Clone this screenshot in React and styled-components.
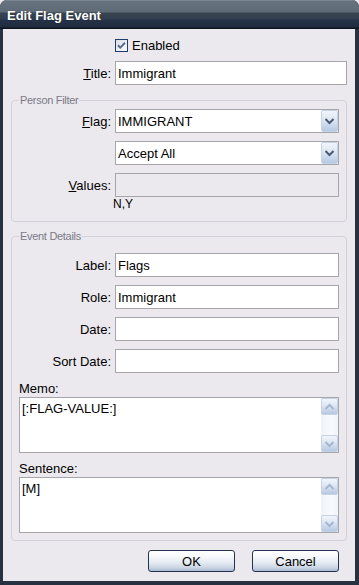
import React from 'react';
import styled, { createGlobalStyle } from 'styled-components';

const FONT = `"Liberation Sans", Arial, sans-serif`;

const Global = createGlobalStyle`
  html, body { margin: 0; padding: 0; background: #EBE9ED; }
  body { font-family: ${FONT}; font-size: 13px; color: #000; }
  * { box-sizing: border-box; }
`;

const Window = styled.div`
  width: 359px;
  height: 585px;
  display: flex;
  flex-direction: column;
  background: #27313F;
  border-radius: 7px 7px 0 0;
  overflow: hidden;
`;

const TitleBar = styled.div`
  height: 29px;
  flex: none;
  display: flex;
  align-items: center;
  padding: 1px 0 0 7px;
  background: linear-gradient(
    to bottom,
    #8E98A3 0px, #67737F 1px, #5E6A76 12px,
    #38444F 13px, #323E4F 19px,
    #253247 20px, #1F2C40 27px,
    #0E141E 28px, #0E141E 29px
  );
`;

const TitleText = styled.span`
  color: #fff;
  font: bold 13px ${FONT};
  letter-spacing: 0;
  text-shadow: 0 0 1px rgba(0, 0, 0, 0.4);
`;

const Client = styled.div`
  flex: 1;
  margin: 0 4px 4px 3px;
  background: #EBE9ED;
  padding: 10px 8px 9px 8px;
  display: flex;
  flex-direction: column;
`;

const Row = styled.div`
  display: grid;
  grid-template-columns: ${p => p.$labelW}px 1fr;
  column-gap: 4px;
  align-items: center;
  margin-top: ${p => p.$mt || 0}px;
`;

const Label = styled.label`
  text-align: right;
  font-size: 13px;
  line-height: 15px;
  white-space: nowrap;
  u { text-decoration: underline; text-underline-offset: 1px; }
`;

const TextBox = styled.input`
  height: 24px;
  width: 100%;
  margin: 0;
  border: 1px solid #A6A5AC;
  background: ${p => (p.$disabled ? '#EBE9ED' : '#fff')};
  padding: 0 2px;
  font: 13px ${FONT};
  color: #000;
  outline: none;
`;

const CheckLine = styled.div`
  display: flex;
  align-items: center;
  gap: 4px;
  height: 13px;
  font-size: 13px;
`;

const Group = styled.fieldset`
  margin: ${p => p.$mt}px 0 0 0;
  padding: 0 7px ${p => p.$pb}px 7px;
  border: 1px solid #D2D0D9;
  border-radius: 4px;
  min-width: 0;
`;

const Legend = styled.legend`
  padding: 0 1px;
  margin: 0;
  color: #7A7987;
  font: 11px ${FONT};
  letter-spacing: -0.3px;
  line-height: 14px;
`;

const GroupBody = styled.div`
  display: flex;
  flex-direction: column;
  gap: 8px;
  padding-top: ${p => p.$pt}px;
`;

const Hint = styled.div`
  font-size: 12px;
  line-height: 13px;
  margin-top: -7px;
  padding-left: 94px;
`;

const ComboBox = styled.div`
  height: 24px;
  border: 1px solid #A6A5AC;
  background: #fff;
  display: flex;
  align-items: center;
  padding-left: 2px;
`;

const ComboText = styled.span`
  flex: 1;
  font-size: 13px;
  line-height: 15px;
`;

const ArrowButton = styled.div`
  width: 17px;
  height: ${p => p.$h}px;
  flex: none;
  border: 1px solid #C6D2E5;
  border-radius: 2px;
  background: linear-gradient(to bottom, #F1F5FC 0%, #DCE6F4 45%, #C7D6EB 75%, #B6C8E2 100%);
  display: flex;
  align-items: center;
  justify-content: center;
`;

const StackedLabel = styled.div`
  font-size: 13px;
  line-height: 15px;
  margin-bottom: -7px;
`;

const MemoBox = styled.div`
  height: 56px;
  border: 1px solid #A6A5AC;
  background: #fff;
  display: flex;
`;

const MemoText = styled.div`
  flex: 1;
  padding: 3px 2px;
  font-size: 13px;
  line-height: 15px;
`;

const ScrollBar = styled.div`
  width: 17px;
  flex: none;
  display: flex;
  flex-direction: column;
  justify-content: space-between;
  background: linear-gradient(to right, #EEF2F9, #F8FAFD 60%, #F1F4FA);
`;

const ButtonRow = styled.div`
  display: flex;
  justify-content: flex-end;
  gap: 17px;
  padding-right: 8px;
  margin-top: 9px;
`;

const PushButton = styled.button`
  width: 87px;
  height: 22px;
  margin: 0;
  padding: 0;
  border: 1px solid #24344F;
  border-radius: 3px;
  background: linear-gradient(to bottom, #FFFFFF 0%, #F5F7FA 30%, #E4E9F1 60%, #C8D3E3 85%, #A9B9D0 100%);
  font: 13px ${FONT};
  color: #000;
`;

const Chevron = ({ dir = 'down', color }) => (
  <svg width="11" height="8" viewBox="0 0 11 8">
    <path
      d={dir === 'down' ? 'M1.5 2 L5.5 6 L9.5 2' : 'M1.5 6 L5.5 2 L9.5 6'}
      fill="none"
      stroke={color}
      strokeWidth="2"
    />
  </svg>
);

const CheckBox = () => (
  <svg width="13" height="13" viewBox="0 0 13 13">
    <defs>
      <linearGradient id="cbg" x1="0" y1="0" x2="1" y2="1">
        <stop offset="0" stopColor="#D9DEE6" />
        <stop offset="1" stopColor="#FBFCFD" />
      </linearGradient>
    </defs>
    <rect x="0.5" y="0.5" width="12" height="12" fill="url(#cbg)" stroke="#1F3E6B" />
    <path d="M3 6.2 L5.3 8.6 L10 3.8" fill="none" stroke="#5B6D8A" strokeWidth="2" />
  </svg>
);

const Combo = ({ value }) => (
  <ComboBox>
    <ComboText>{value}</ComboText>
    <ArrowButton $h={22}>
      <Chevron color="#4B5A74" />
    </ArrowButton>
  </ComboBox>
);

const Memo = ({ value }) => (
  <MemoBox>
    <MemoText>{value}</MemoText>
    <ScrollBar>
      <ArrowButton $h={17}>
        <Chevron dir="up" color="#A7B6CC" />
      </ArrowButton>
      <ArrowButton $h={17}>
        <Chevron color="#A7B6CC" />
      </ArrowButton>
    </ScrollBar>
  </MemoBox>
);

const OUT = 100;
const IN = 92;

export default function App() {
  return (
    <>
      <Global />
      <Window>
        <TitleBar>
          <TitleText>Edit Flag Event</TitleText>
        </TitleBar>
        <Client>
          <Row $labelW={OUT}>
            <span />
            <CheckLine>
              <CheckBox />
              <span>Enabled</span>
            </CheckLine>
          </Row>
          <Row $labelW={OUT} $mt={9}>
            <Label><u>T</u>itle:</Label>
            <TextBox defaultValue="Immigrant" />
          </Row>

          <Group $mt={8} $pb={10}>
            <Legend>Person Filter</Legend>
            <GroupBody $pt={2}>
              <Row $labelW={IN}>
                <Label><u>F</u>lag:</Label>
                <Combo value="IMMIGRANT" />
              </Row>
              <Row $labelW={IN}>
                <span />
                <Combo value="Accept All" />
              </Row>
              <Row $labelW={IN}>
                <Label><u>V</u>alues:</Label>
                <TextBox $disabled readOnly defaultValue="" />
              </Row>
              <Hint>N,Y</Hint>
            </GroupBody>
          </Group>

          <Group $mt={7} $pb={7}>
            <Legend>Event Details</Legend>
            <GroupBody $pt={10}>
              <Row $labelW={IN}>
                <Label>Label:</Label>
                <TextBox defaultValue="Flags" />
              </Row>
              <Row $labelW={IN}>
                <Label>Role:</Label>
                <TextBox defaultValue="Immigrant" />
              </Row>
              <Row $labelW={IN}>
                <Label>Date:</Label>
                <TextBox defaultValue="" />
              </Row>
              <Row $labelW={IN}>
                <Label>Sort Date:</Label>
                <TextBox defaultValue="" />
              </Row>
              <StackedLabel>Memo:</StackedLabel>
              <Memo value="[:FLAG-VALUE:]" />
              <StackedLabel>Sentence:</StackedLabel>
              <Memo value="[M]" />
            </GroupBody>
          </Group>

          <ButtonRow>
            <PushButton>OK</PushButton>
            <PushButton>Cancel</PushButton>
          </ButtonRow>
        </Client>
      </Window>
    </>
  );
}
